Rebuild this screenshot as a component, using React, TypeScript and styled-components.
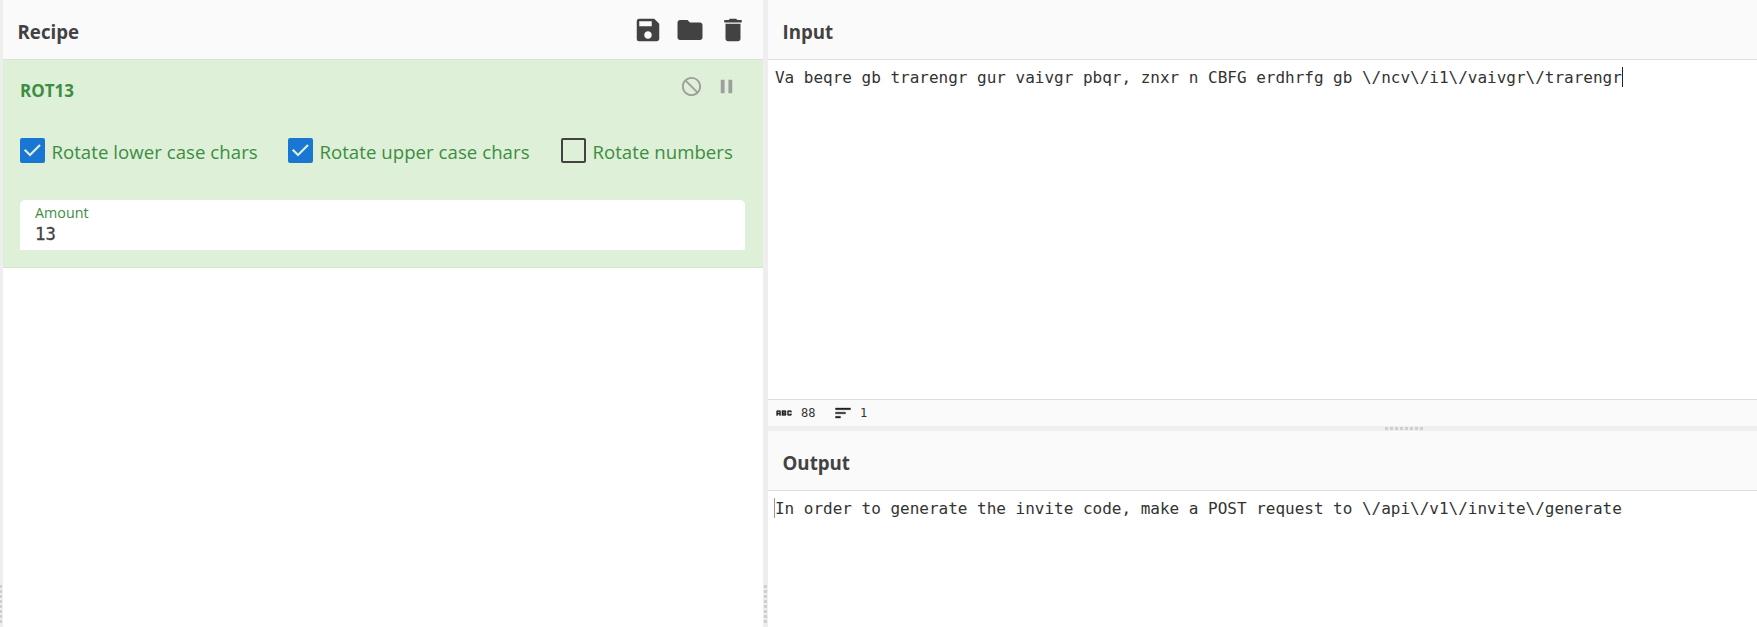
import React from "react";
import styled, { createGlobalStyle } from "styled-components";
import { MdAbc, MdDelete, MdFolder, MdNotInterested, MdPause, MdSave, MdSort } from "react-icons/md";

const sans = `"Open Sans", "Noto Sans", sans-serif`;
const mono = `"DejaVu Sans Mono", "Liberation Mono", monospace`;

const GlobalStyle = createGlobalStyle`
  * { box-sizing: border-box; }
  body { margin: 0; background: #fff; overflow: hidden; }
`;

const Page = styled.div`
  display: flex;
  width: 100vw;
  height: 100vh;
  font-family: ${sans};
  color: #424242;
`;

const Gutter = styled.div<{ $direction: "row" | "column"; $size: number }>`
  flex: 0 0 ${(p) => p.$size}px;
  display: flex;
  flex-direction: ${(p) => p.$direction};
  align-items: ${(p) => (p.$size === 3 ? "flex-start" : "center")};
  justify-content: ${(p) => (p.$direction === "row" ? "center" : "flex-end")};
  gap: 2px;
  padding: ${(p) => (p.$direction === "row" ? "0 0 0 282px" : "0 0 4px")};
  background: #eee;
`;

const Dot = styled.i<{ $width: number }>`
  width: ${(p) => p.$width}px;
  height: 3px;
  background: #cfcfcf;
`;

const RecipePane = styled.section`
  flex: 0 0 760px;
  display: flex;
  flex-direction: column;
`;

const IoColumn = styled.div`
  flex: 1;
  min-width: 0;
  display: flex;
  flex-direction: column;
`;

const IoPane = styled.section<{ $height?: number }>`
  flex: ${(p) => (p.$height ? `0 0 ${p.$height}px` : "1")};
  display: flex;
  flex-direction: column;
`;

const TitleBar = styled.header`
  flex: 0 0 60px;
  height: 60px;
  display: flex;
  justify-content: space-between;
  padding: 0 15px 0 14.5px;
  background: #fafafa;
  border-bottom: 1px solid #ddd;
`;

const Title = styled.h1`
  margin: 0;
  padding-top: 5px;
  font-size: 18.7px;
  font-weight: 700;
  line-height: 54px;
`;

const TitleActions = styled.div`
  display: flex;
  gap: 12.5px;
  padding-top: 15px;
`;

const IconButton = styled.button<{ $muted?: boolean }>`
  display: flex;
  padding: 0;
  border: 0;
  background: none;
  align-self: flex-start;
  color: ${(p) => (p.$muted ? "#9e9e9e" : "#424242")};
`;

const FolderButton = styled(IconButton)`
  margin: 0 0.6px 0 -0.6px;
`;

const Operation = styled.article`
  height: 208px;
  padding: 0 18px 0 17px;
  background: #dff0d8;
  border-bottom: 1px solid #d0e9c6;
  color: #3c8d42;
`;

const OperationHead = styled.div`
  display: flex;
  justify-content: space-between;
  height: 78px;
  padding: 15px 7px 0 0;
`;

const OperationName = styled.h2`
  margin: 0;
  font-size: 17px;
  line-height: 32px;
  font-weight: 700;
`;

const OperationActions = styled.div`
  display: flex;
  gap: 12px;
`;

const CheckRow = styled.div`
  display: flex;
  height: 62px;
`;

const CheckField = styled.label<{ $width: number }>`
  display: flex;
  gap: 6.4px;
  width: ${(p) => p.$width}px;
  white-space: nowrap;
  font-size: 18.6px;
  letter-spacing: 0.05px;
  line-height: 28px;
`;

const CheckBox = styled.span<{ $checked: boolean }>`
  flex: 0 0 25px;
  height: 25px;
  border: 2px solid ${(p) => (p.$checked ? "#1976d2" : "#424242")};
  border-radius: 2px;
  background: ${(p) => (p.$checked ? "#1976d2" : "transparent")};
`;

const Tick = styled.svg`
  display: block;
  width: 21px;
  height: 21px;
  fill: none;
  stroke: #dff0d8;
  stroke-width: 2.2;
`;

const AmountField = styled.div`
  height: 50px;
  padding: 3px 15px 0;
  background: #fff;
  border-radius: 5px 5px 0 0;
`;

const AmountLabel = styled.div`
  font-size: 14.3px;
  line-height: 20px;
`;

const AmountValue = styled.div`
  font-family: ${mono};
  font-size: 17.3px;
  line-height: 22px;
  color: #424242;
  -webkit-text-stroke: 0.3px #424242;
`;

const Editor = styled.div`
  flex: 1;
  display: flex;
  align-items: flex-start;
  padding: 7px 6px 0;
  background: #fff;
`;

const EditorText = styled.span`
  padding-left: 1px;
  font-family: ${mono};
  font-size: 16px;
  letter-spacing: -0.01px;
  line-height: 21px;
  white-space: pre;
  color: #333;
`;

const Caret = styled.i<{ $color: string }>`
  width: 1px;
  height: 20px;
  margin-right: -1px;
  background: ${(p) => p.$color};
`;

const StatusBar = styled.footer`
  flex: 0 0 27px;
  display: flex;
  align-items: center;
  padding-left: 6px;
  background: #fafafa;
  border-top: 1px solid #ddd;
  color: #333;
`;

const StatusItem = styled.div`
  display: flex;
  align-items: center;
  gap: 7px;
  width: 59px;
  font-family: ${mono};
  font-size: 12px;
  line-height: 20px;

  svg path:last-child {
    fill: #222;
    stroke: #222;
    stroke-width: 0.4;
  }
`;

const options = [
  { label: "Rotate lower case chars", checked: true, width: 268 },
  { label: "Rotate upper case chars", checked: true, width: 273 },
  { label: "Rotate numbers", checked: false, width: 175 },
];

function Grip({ width = 3 }: { width?: number }) {
  return (
    <>
      {Array.from({ length: 8 }, (_, i) => (
        <Dot key={i} $width={width} />
      ))}
    </>
  );
}

export default function App() {
  return (
    <Page>
      <GlobalStyle />
      <Gutter $direction="column" $size={3}>
        <Grip width={2} />
      </Gutter>
      <RecipePane>
        <TitleBar>
          <Title>Recipe</Title>
          <TitleActions>
            <IconButton><MdSave size={30} /></IconButton>
            <FolderButton><MdFolder size={30} /></FolderButton>
            <IconButton><MdDelete size={30} /></IconButton>
          </TitleActions>
        </TitleBar>
        <Operation>
          <OperationHead>
            <OperationName>ROT13</OperationName>
            <OperationActions>
              <IconButton $muted><MdNotInterested size={23} /></IconButton>
              <IconButton $muted><MdPause size={23} /></IconButton>
            </OperationActions>
          </OperationHead>
          <CheckRow>
            {options.map((o) => (
              <CheckField key={o.label} $width={o.width}>
                <CheckBox $checked={o.checked}>
                  {o.checked && (
                    <Tick viewBox="0 0 21 21">
                      <path d="M2.7 9.7 L8 15 L18 5" />
                    </Tick>
                  )}
                </CheckBox>
                {o.label}
              </CheckField>
            ))}
          </CheckRow>
          <AmountField>
            <AmountLabel>Amount</AmountLabel>
            <AmountValue>13</AmountValue>
          </AmountField>
        </Operation>
      </RecipePane>
      <Gutter $direction="column" $size={5}>
        <Grip />
      </Gutter>
      <IoColumn>
        <IoPane $height={426}>
          <TitleBar>
            <Title>Input</Title>
          </TitleBar>
          <Editor>
            <EditorText>{"Va beqre gb trarengr gur vaivgr pbqr, znxr n CBFG erdhrfg gb \\/ncv\\/i1\\/vaivgr\\/trarengr"}</EditorText>
            <Caret $color="#222" />
          </Editor>
          <StatusBar>
            <StatusItem><MdAbc size={20} />88</StatusItem>
            <StatusItem><MdSort size={20} />1</StatusItem>
          </StatusBar>
        </IoPane>
        <Gutter $direction="row" $size={5}>
          <Grip />
        </Gutter>
        <IoPane>
          <TitleBar>
            <Title>Output</Title>
          </TitleBar>
          <Editor>
            <Caret $color="#999" />
            <EditorText>{"In order to generate the invite code, make a POST request to \\/api\\/v1\\/invite\\/generate"}</EditorText>
          </Editor>
        </IoPane>
      </IoColumn>
    </Page>
  );
}
